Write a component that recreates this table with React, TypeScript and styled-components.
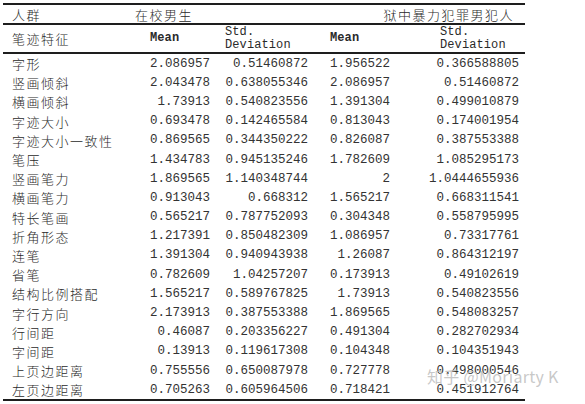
import React from "react";
import styled, { createGlobalStyle } from "styled-components";

const Global = createGlobalStyle`
  html, body { margin: 0; padding: 0; background: #fff; }
  body { width: 585px; height: 404px; overflow: hidden; }
`;

const Page = styled.div`
  position: relative;
  width: 585px;
  height: 404px;
  padding: 3px 0 0 3px;
  box-sizing: border-box;
  color: #2a2a2a;
`;

const Table = styled.div`
  width: 522px;
  display: grid;
  grid-template-columns: 132px 80px 98px 82px 130px;
  border-top: 2px solid #1e1e1e;
  border-bottom: 2px solid #1e1e1e;
`;

const cjk = `"Noto Sans CJK SC", "Noto Sans", sans-serif`;
const mono = `"Liberation Mono", "DejaVu Sans Mono", monospace`;

const GroupCell = styled.div<{ $span?: number; $align?: string; $pl?: number; $pr?: number }>`
  grid-column: span ${(p) => p.$span ?? 1};
  height: 18px;
  display: flex;
  align-items: center;
  justify-content: ${(p) => p.$align ?? "flex-start"};
  padding-left: ${(p) => p.$pl ?? 0}px;
  padding-right: ${(p) => p.$pr ?? 0}px;
  font-family: ${cjk};
  font-size: 13px;
  font-weight: 300;
  letter-spacing: 1.5px;
  border-bottom: 2px solid #1e1e1e;
`;

const HeadCell = styled.div<{ $pl?: number }>`
  height: 27px;
  display: flex;
  flex-direction: column;
  justify-content: center;
  padding-left: ${(p) => p.$pl ?? 0}px;
  border-bottom: 2px solid #1e1e1e;
`;

const HeadLabel = styled.span`
  font-family: ${cjk};
  font-size: 13px;
  font-weight: 300;
  letter-spacing: 1.5px;
`;

const HeadMono = styled.span<{ $bold?: boolean }>`
  font-family: ${mono};
  font-size: 12px;
  line-height: 13px;
  font-weight: ${(p) => (p.$bold ? 700 : 400)};
  letter-spacing: 0.1px;
`;

const Label = styled.div`
  height: 19.2px;
  display: flex;
  align-items: center;
  padding-left: 9px;
  font-family: ${cjk};
  font-size: 13px;
  font-weight: 300;
  letter-spacing: 1.5px;
  white-space: nowrap;
`;

const Num = styled.div<{ $pr: number }>`
  height: 19.2px;
  display: flex;
  align-items: center;
  justify-content: flex-end;
  padding-right: ${(p) => p.$pr}px;
  font-family: ${mono};
  font-size: 12.5px;
  color: #333;
`;

const Watermark = styled.div`
  position: absolute;
  left: 427px;
  top: 364px;
  font-family: ${cjk};
  font-size: 16px;
  color: rgba(190, 190, 190, 0.85);
  letter-spacing: 0.3px;
  white-space: nowrap;
  pointer-events: none;
`;

const rows: [string, string, string, string, string][] = [
  ["字形", "2.086957", "0.51460872", "1.956522", "0.366588805"],
  ["竖画倾斜", "2.043478", "0.638055346", "2.086957", "0.51460872"],
  ["横画倾斜", "1.73913", "0.540823556", "1.391304", "0.499010879"],
  ["字迹大小", "0.693478", "0.142465584", "0.813043", "0.174001954"],
  ["字迹大小一致性", "0.869565", "0.344350222", "0.826087", "0.387553388"],
  ["笔压", "1.434783", "0.945135246", "1.782609", "1.085295173"],
  ["竖画笔力", "1.869565", "1.140348744", "2", "1.0444655936"],
  ["横画笔力", "0.913043", "0.668312", "1.565217", "0.668311541"],
  ["特长笔画", "0.565217", "0.787752093", "0.304348", "0.558795995"],
  ["折角形态", "1.217391", "0.850482309", "1.086957", "0.73317761"],
  ["连笔", "1.391304", "0.940943938", "1.26087", "0.864312197"],
  ["省笔", "0.782609", "1.04257207", "0.173913", "0.49102619"],
  ["结构比例搭配", "1.565217", "0.589767825", "1.73913", "0.540823556"],
  ["字行方向", "2.173913", "0.387553388", "1.869565", "0.548083257"],
  ["行间距", "0.46087", "0.203356227", "0.491304", "0.282702934"],
  ["字间距", "0.13913", "0.119617308", "0.104348", "0.104351943"],
  ["上页边距离", "0.755556", "0.650087978", "0.727778", "0.498000546"],
  ["左页边距离", "0.705263", "0.605964506", "0.718421", "0.451912764"],
];

export default function App() {
  return (
    <Page>
      <Global />
      <Table>
        <GroupCell $pl={9}>人群</GroupCell>
        <GroupCell $span={2}>在校男生</GroupCell>
        <GroupCell $span={2} $align="flex-end" $pr={11}>
          狱中暴力犯罪男犯人
        </GroupCell>

        <HeadCell $pl={9}>
          <HeadLabel>笔迹特征</HeadLabel>
        </HeadCell>
        <HeadCell $pl={15}>
          <HeadMono $bold>Mean</HeadMono>
        </HeadCell>
        <HeadCell $pl={10}>
          <HeadMono>Std.</HeadMono>
          <HeadMono>Deviation</HeadMono>
        </HeadCell>
        <HeadCell $pl={17}>
          <HeadMono $bold>Mean</HeadMono>
        </HeadCell>
        <HeadCell $pl={45}>
          <HeadMono>Std.</HeadMono>
          <HeadMono>Deviation</HeadMono>
        </HeadCell>

        {rows.map((r) => (
          <React.Fragment key={r[0]}>
            <Label>{r[0]}</Label>
            <Num $pr={5}>{r[1]}</Num>
            <Num $pr={5}>{r[2]}</Num>
            <Num $pr={5}>{r[3]}</Num>
            <Num $pr={6}>{r[4]}</Num>
          </React.Fragment>
        ))}
      </Table>
      <Watermark>知乎 @Moriarty K</Watermark>
    </Page>
  );
}
